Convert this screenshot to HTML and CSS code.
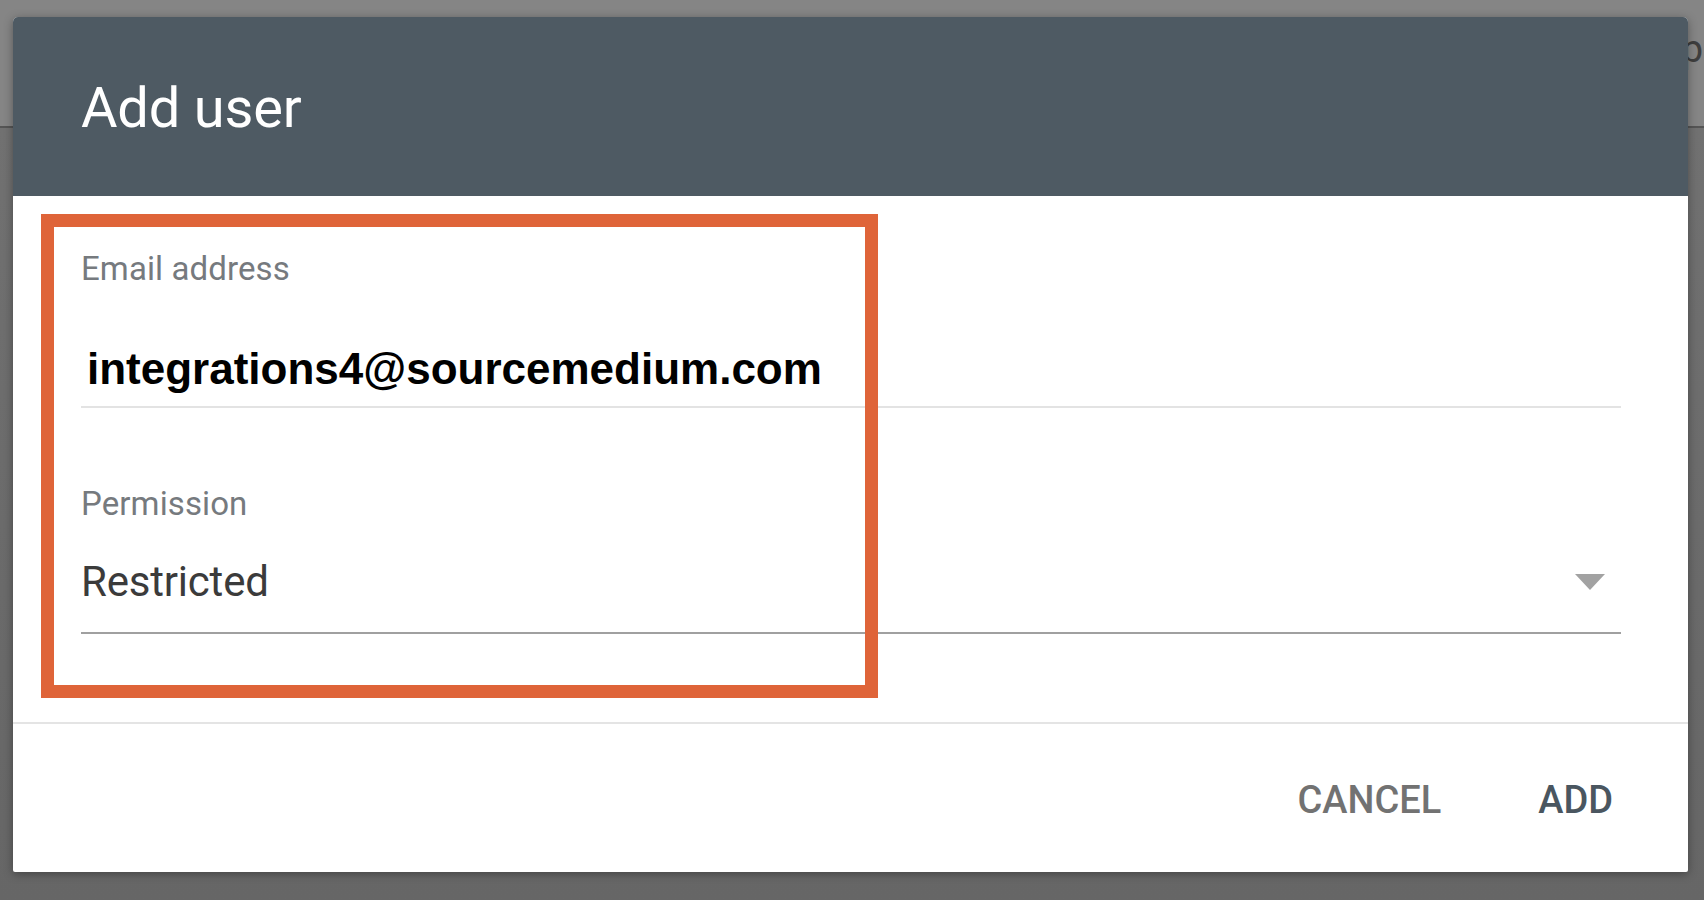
FILE: index.html
```html
<!DOCTYPE html>
<html lang="en">
<head>
<meta charset="utf-8">
<title>Add user</title>
<link rel="stylesheet" href="styles.css">
</head>
<body>
<div class="page">
  <div class="page-header"><span class="page-header-text">p</span></div>
  <div class="page-body"></div>
</div>

<div class="dialog" role="dialog" aria-labelledby="dlg-title">
  <div class="dialog-header">
    <h1 id="dlg-title" class="dialog-title">Add user</h1>
  </div>
  <div class="dialog-body">
    <div class="field field-email">
      <div class="field-label">Email address</div>
      <div class="field-value email-value">integrations4@sourcemedium.com</div>
      <div class="field-line light"></div>
    </div>
    <div class="field field-perm">
      <div class="field-label">Permission</div>
      <div class="select-row">
        <div class="field-value select-value">Restricted</div>
        <span class="select-arrow"></span>
      </div>
      <div class="field-line dark"></div>
    </div>
  </div>
  <div class="dialog-footer">
    <button class="btn btn-cancel">CANCEL</button>
    <button class="btn btn-add">ADD</button>
  </div>
  <div class="annotation"></div>
</div>
</body>
</html>
```

FILE: styles.css
```css
html, body {
  margin: 0;
  padding: 0;
}
body {
  width: 1704px;
  height: 900px;
  overflow: hidden;
  background: #686868;
  font-family: Roboto, "Liberation Sans", Arial, sans-serif;
}

.page {
  display: flex;
  flex-direction: column;
  height: 900px;
}
.page-header {
  height: 126px;
  background: #858585;
  border-bottom: 2px solid #555;
  display: flex;
  justify-content: flex-end;
  overflow: hidden;
}
.page-header-text {
  font-size: 38px;
  line-height: 1;
  color: #3e3e3e;
  margin-top: 30px;
  margin-right: 1px;
}
.page-body {
  flex: 1;
  background: linear-gradient(180deg, #717171 0%, #6a6a6a 60%, #666 100%);
}

.dialog {
  position: absolute;
  left: 13px;
  top: 17px;
  width: 1675px;
  height: 855px;
  background: #fff;
  border-radius: 5px 5px 2px 2px;
  box-shadow: 0 2px 10px rgba(0,0,0,0.35);
  display: flex;
  flex-direction: column;
  overflow: hidden;
}

.dialog-header {
  height: 179px;
  flex: none;
  background: #4e5a63;
  padding: 63px 68px 0;
  box-sizing: border-box;
}
.dialog-title {
  margin: 0;
  font-family: Roboto, sans-serif;
  font-weight: 400;
  font-size: 56px;
  line-height: 1;
  color: #fff;
  letter-spacing: -0.2px;
}

.dialog-body {
  height: 528px;
  flex: none;
  box-sizing: border-box;
  padding: 56px 67px 0 68px;
  border-bottom: 2px solid #e4e4e4;
  display: flex;
  flex-direction: column;
}

.field {
  display: flex;
  flex-direction: column;
}
.field-label {
  font-size: 33px;
  line-height: 1;
  color: #767a7e;
  letter-spacing: 0.1px;
}
.email-value {
  margin-top: 62px;
  padding-left: 6px;
  font-family: "Liberation Sans", Arial, sans-serif;
  font-weight: 700;
  font-size: 44px;
  line-height: 1;
  color: #000;
}
.field-line {
  margin-top: 15px;
}
.field-line.light {
  height: 2px;
  background: #e3e3e3;
}
.field-line.dark {
  height: 2px;
  background: #a0a0a0;
  margin-top: 29px;
}

.field-perm {
  margin-top: 79px;
}
.select-row {
  display: flex;
  align-items: flex-start;
  margin-top: 41px;
}
.select-value {
  flex: 1;
  font-size: 42px;
  line-height: 1;
  color: #3b3b3b;
  letter-spacing: -0.2px;
}
.select-arrow {
  width: 0;
  height: 0;
  border-left: 15px solid transparent;
  border-right: 15px solid transparent;
  border-top: 16px solid #a2a2a2;
  margin-top: 13px;
  margin-right: 16px;
}

.dialog-footer {
  flex: 1;
  display: flex;
  justify-content: flex-end;
  align-items: flex-start;
  padding: 57px 75px 0 0;
  gap: 97px;
}
.btn {
  border: 0;
  background: none;
  padding: 0;
  margin: 0;
  font-family: Roboto, sans-serif;
  font-weight: 500;
  font-size: 38px;
  line-height: 1;
  cursor: pointer;
}
.btn-cancel {
  color: #727272;
}
.btn-add {
  color: #4a5660;
}

.annotation {
  position: absolute;
  left: 28px;
  top: 197px;
  width: 837px;
  height: 484px;
  box-sizing: border-box;
  border: 13px solid #df6439;
  pointer-events: none;
}
```
